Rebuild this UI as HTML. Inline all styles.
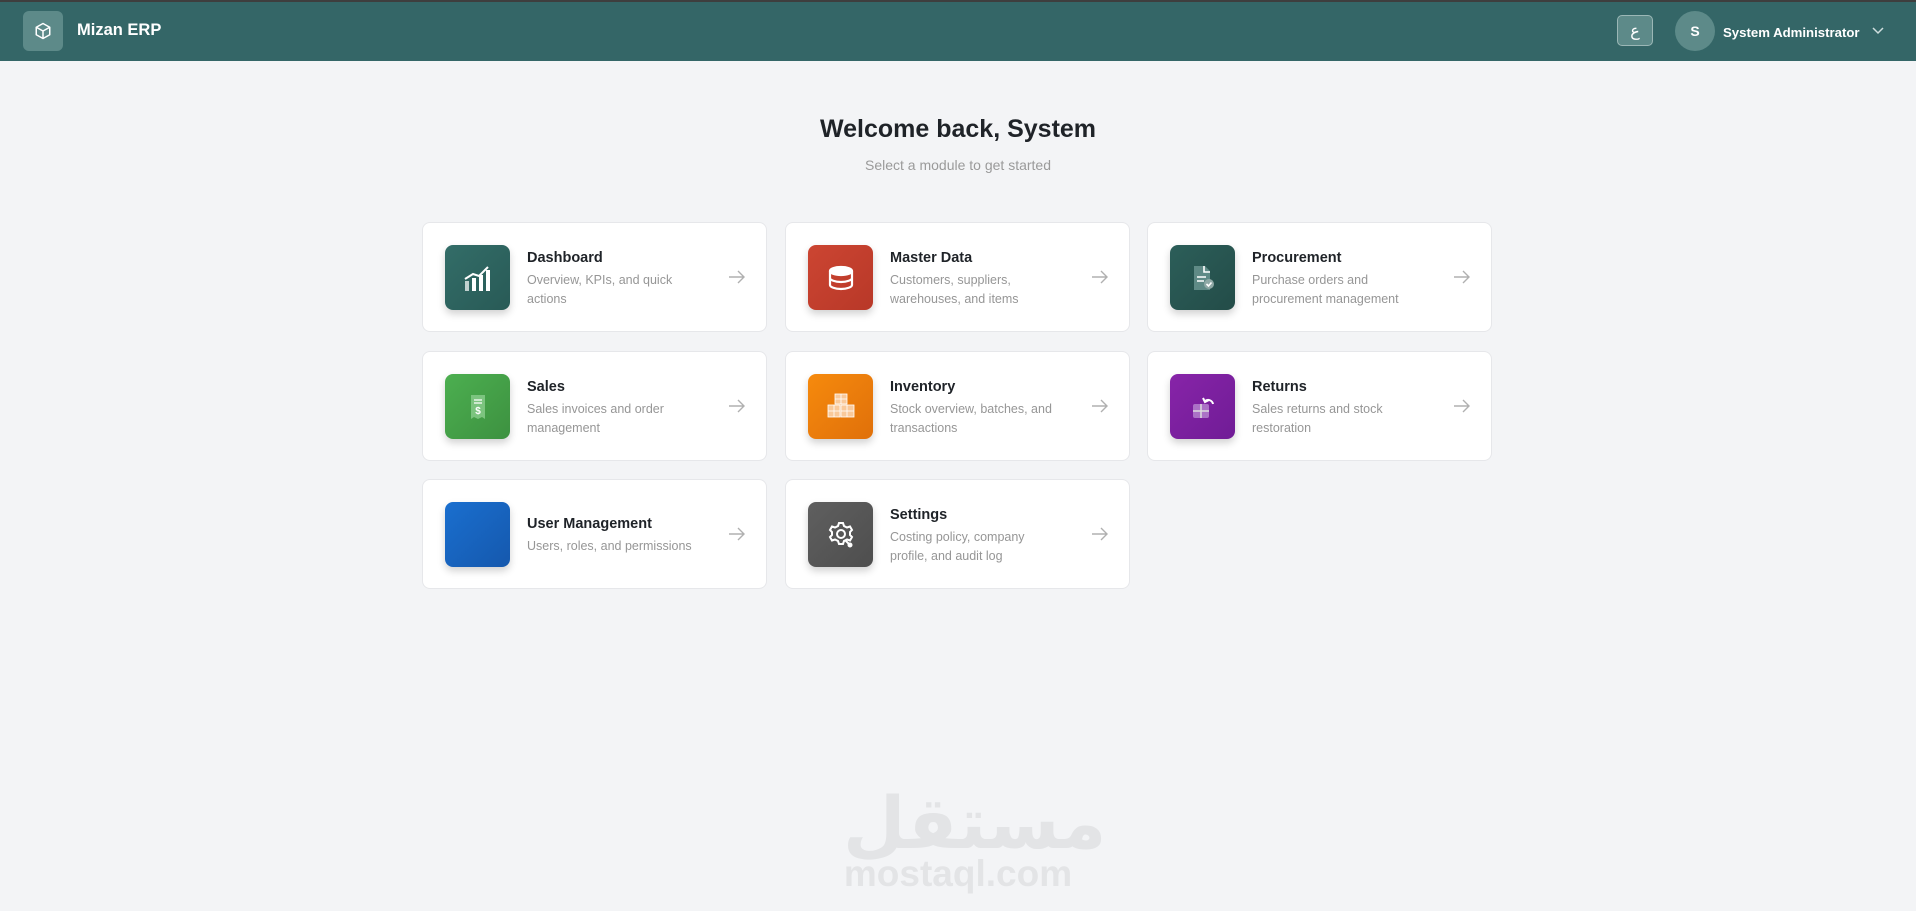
<!DOCTYPE html>
<html><head><meta charset="utf-8"><style>
*{box-sizing:border-box;margin:0;padding:0}
body{width:1916px;height:911px;background:#f3f4f6;font-family:"Liberation Sans","Noto Sans CJK SC",sans-serif;position:relative;overflow:hidden}
.hdr{position:absolute;left:0;top:0;width:1916px;height:61px;background:#346667;border-top:2px solid #3e3e3e}
.logo{position:absolute;left:23px;top:9px;width:40px;height:40px;border-radius:6px;background:#5d8a89;display:flex;align-items:center;justify-content:center}
.brand{position:absolute;left:77px;top:19px;color:#fff;font-size:16.5px;font-weight:bold}
.lang{position:absolute;left:1617px;top:13px;width:36px;height:31px;border:1px solid #9bb7b6;border-radius:5px;background:#5d8a89;color:#fff;font-size:16px;display:flex;align-items:center;justify-content:center}
.av{position:absolute;left:1675px;top:9px;width:40px;height:40px;border-radius:50%;background:#5d8a89;color:#fff;font-weight:bold;font-size:14px;display:flex;align-items:center;justify-content:center}
.name{position:absolute;left:1723px;top:23px;color:#fff;font-size:13.2px;font-weight:bold}
.chev{position:absolute;left:1871px;top:22px}
h1{position:absolute;left:0;width:1916px;top:115px;text-align:center;font-size:25px;font-weight:bold;color:#1f2328}
.sub{position:absolute;left:0;width:1916px;top:157px;text-align:center;font-size:14px;color:#9a9a9a}
.card{position:absolute;width:345px;height:110px;background:#fff;border:1px solid #e6e7ea;border-radius:8px}
.ic{position:absolute;left:22px;top:22px;width:65px;height:65px;border-radius:8px;box-shadow:0 4px 8px rgba(0,0,0,.18);display:flex;align-items:center;justify-content:center}
.t{position:absolute;left:104px;top:27px;font-size:14.5px;font-weight:bold;color:#1f2328}
.d{position:absolute;left:104px;top:48px;width:170px;font-size:12.5px;line-height:19px;color:#969696}
.one .t{top:36px}.one .d{top:57px}
.ar{position:absolute;left:305px;top:46px}
.wm1{position:absolute;left:843px;top:778px;width:230px;text-align:center;font-size:72px;font-weight:bold;color:#e3e4e6;font-family:"DejaVu Sans",sans-serif;line-height:90px}
.wm2{position:absolute;left:840px;top:853px;width:236px;text-align:center;font-size:37px;font-weight:bold;color:#e3e4e6}
</style></head><body>
<div class="hdr">
<div class="logo"><svg width="18" height="18" viewBox="0 0 24 24" fill="none" stroke="#fff" stroke-width="2" stroke-linejoin="round"><path d="M12 2l9 5v10l-9 5-9-5V7z"/><path d="M3 7l9 5 9-5M12 12v10"/></svg></div>
<div class="brand">Mizan ERP</div>
<div class="lang">ع</div>
<div class="av">S</div>
<div class="name">System Administrator</div>
<svg class="chev" width="14" height="14" viewBox="0 0 14 14" fill="none" stroke="#cfdede" stroke-width="1.5"><path d="M2 4l5 5 5-5"/></svg>
</div>
<h1>Welcome back, System</h1>
<div class="sub">Select a module to get started</div>

<div class="card" style="left:422px;top:222px"><div class="ic" style="background:linear-gradient(135deg,#336d68,#285a56)"><svg width="30" height="30" viewBox="0 0 30 30" fill="#fff"><rect x="2" y="18" width="4" height="10" opacity=".7"/><rect x="9" y="15" width="4" height="13"/><rect x="16" y="12" width="4" height="16"/><rect x="23" y="7" width="4" height="21"/><path d="M2 16l8-5 6 2 9-9" stroke="#fff" stroke-width="2" fill="none"/></svg></div><div class="t">Dashboard</div><div class="d">Overview, KPIs, and quick actions</div><svg class="ar" width="18" height="16" viewBox="0 0 18 16" fill="none" stroke="#b0b0b0" stroke-width="1.4"><path d="M1 8h15M10 2l6 6-6 6"/></svg></div>

<div class="card" style="left:785px;top:222px"><div class="ic" style="background:linear-gradient(135deg,#cc4532,#b83828)"><svg width="30" height="30" viewBox="0 0 30 30" fill="none" stroke="#fff" stroke-width="2.2"><ellipse cx="15" cy="8" rx="11" ry="4" fill="#fff"/><path d="M4 8v14c0 2 5 4 11 4s11-2 11-4V8M4 15c0 2 5 4 11 4s11-2 11-4"/></svg></div><div class="t">Master Data</div><div class="d">Customers, suppliers, warehouses, and items</div><svg class="ar" width="18" height="16" viewBox="0 0 18 16" fill="none" stroke="#b0b0b0" stroke-width="1.4"><path d="M1 8h15M10 2l6 6-6 6"/></svg></div>

<div class="card" style="left:1147px;top:222px"><div class="ic" style="background:linear-gradient(135deg,#2c5e59,#234c48)"><svg width="30" height="30" viewBox="0 0 30 30"><path d="M6 3h11l5 5v19H6z" fill="#5f8a86"/><path d="M16 3v6h6" stroke="#fff" stroke-width="1.6" fill="none"/><path d="M9 14h9M9 18h7" stroke="#fff" stroke-width="1.4"/><circle cx="21" cy="21" r="5" fill="#8fa9a6"/><path d="M18.5 21l2 2 3-3.5" stroke="#fff" stroke-width="1.6" fill="none"/></svg></div><div class="t">Procurement</div><div class="d">Purchase orders and procurement management</div><svg class="ar" width="18" height="16" viewBox="0 0 18 16" fill="none" stroke="#b0b0b0" stroke-width="1.4"><path d="M1 8h15M10 2l6 6-6 6"/></svg></div>

<div class="card" style="left:422px;top:351px"><div class="ic" style="background:linear-gradient(135deg,#4caf50,#3d9140)"><svg width="30" height="30" viewBox="0 0 30 30"><path d="M8 3h14v24l-3-2-4 2-4-2-3 2z" fill="#7cc47f"/><path d="M11 8h8M11 11h8" stroke="#fff" stroke-width="1.2"/><text x="15" y="22" text-anchor="middle" fill="#fff" font-size="10" font-weight="bold" font-family="Liberation Sans">$</text></svg></div><div class="t">Sales</div><div class="d">Sales invoices and order management</div><svg class="ar" width="18" height="16" viewBox="0 0 18 16" fill="none" stroke="#b0b0b0" stroke-width="1.4"><path d="M1 8h15M10 2l6 6-6 6"/></svg></div>

<div class="card" style="left:785px;top:351px"><div class="ic" style="background:linear-gradient(135deg,#f68a0d,#e0700a)"><svg width="32" height="32" viewBox="0 0 32 32" fill="#f9c99a" stroke="#fff" stroke-width="0.8"><rect x="10" y="3" width="12" height="10"/><rect x="3" y="14" width="12" height="12"/><rect x="16" y="14" width="13" height="12"/><path d="M16 3v10M10 8h12M9 14v12M3 20h12M22 14v12M16 20h13"/></svg></div><div class="t">Inventory</div><div class="d">Stock overview, batches, and transactions</div><svg class="ar" width="18" height="16" viewBox="0 0 18 16" fill="none" stroke="#b0b0b0" stroke-width="1.4"><path d="M1 8h15M10 2l6 6-6 6"/></svg></div>

<div class="card" style="left:1147px;top:351px"><div class="ic" style="background:linear-gradient(135deg,#8724a8,#701c96)"><svg width="30" height="30" viewBox="0 0 30 30"><rect x="5" y="12" width="16" height="14" rx="2" fill="#ab72c6"/><path d="M13 12v14M5 19h16" stroke="#ddd" stroke-width="1.5"/><path d="M17 9a5 5 0 0 1 8 3" stroke="#fff" stroke-width="2" fill="none"/><path d="M15 6l2 4 4-2" stroke="#fff" stroke-width="2" fill="none"/></svg></div><div class="t">Returns</div><div class="d">Sales returns and stock restoration</div><svg class="ar" width="18" height="16" viewBox="0 0 18 16" fill="none" stroke="#b0b0b0" stroke-width="1.4"><path d="M1 8h15M10 2l6 6-6 6"/></svg></div>

<div class="card one" style="left:422px;top:479px"><div class="ic" style="background:linear-gradient(135deg,#1a6fcf,#1558ad)"></div><div class="t">User Management</div><div class="d" style="width:200px">Users, roles, and permissions</div><svg class="ar" width="18" height="16" viewBox="0 0 18 16" fill="none" stroke="#b0b0b0" stroke-width="1.4"><path d="M1 8h15M10 2l6 6-6 6"/></svg></div>

<div class="card" style="left:785px;top:479px"><div class="ic" style="background:linear-gradient(135deg,#5f5f5f,#4e4e4e)"><svg width="32" height="32" viewBox="0 0 32 32" fill="none" stroke="#fff" stroke-width="2"><path d="M14 4h4l1 3 3 1.5 3-1 2 3.5-2 2v3l2 2-2 3.5-3-1-3 1.5-1 3h-4l-1-3-3-1.5-3 1-2-3.5 2-2v-3l-2-2 2-3.5 3 1L13 7z"/><circle cx="16" cy="15" r="4"/><path d="M20 21l4 4" /><circle cx="25" cy="26" r="1.5" fill="#fff"/></svg></div><div class="t">Settings</div><div class="d">Costing policy, company profile, and audit log</div><svg class="ar" width="18" height="16" viewBox="0 0 18 16" fill="none" stroke="#b0b0b0" stroke-width="1.4"><path d="M1 8h15M10 2l6 6-6 6"/></svg></div>

<div class="wm1">مستقل</div>
<div class="wm2">mostaql.com</div>
</body></html>
